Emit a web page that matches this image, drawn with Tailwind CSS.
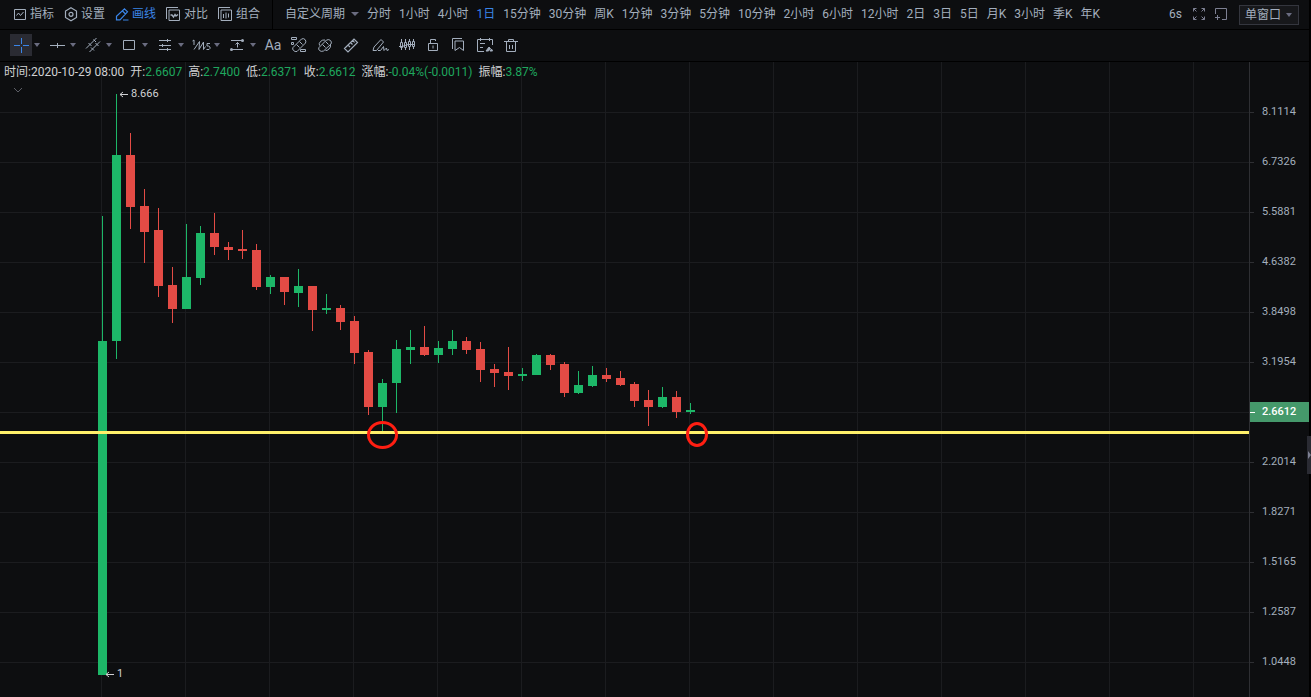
<!DOCTYPE html>
<html lang="zh-CN">
<head>
  <meta charset="UTF-8" />
  <meta name="viewport" content="width=device-width, initial-scale=1.0"/>
  <title>K线图</title>
  <script src="https://cdn.jsdelivr.net/npm/@tailwindcss/browser@4"></script>
</head>

<body class="relative flex h-screen flex-col overflow-hidden bg-black pr-[2px] font-[Roboto,'Noto_Sans_CJK_SC',sans-serif] text-xs text-[#a3aebd]">

  <!-- ===== Top bar ===== -->
  <header class="flex h-[30px] shrink-0 items-stretch border-b border-black bg-[#0d0e10] whitespace-nowrap">
    <nav class="flex w-[273px] shrink-0 items-center gap-[9px] border-r border-black pb-[2px] pl-3">
      <button class="flex items-center gap-[2px]">
        <svg class="size-4" viewBox="0 0 16 16" fill="none" stroke="currentColor"><path d="M2.500 3.500h11v10h-11zM4.500 9.500l2-2.500 2 2.500 3-3.500"/></svg>指标
      </button>
      <button class="flex items-center gap-[2px]">
        <svg class="size-4" viewBox="0 0 16 16" fill="none" stroke="currentColor" stroke-width="1.200"><path d="M8 1.800l5.500 3.200v6.500L8 14.700l-5.500-3.200V5z"/><circle cx="8" cy="8.300" r="2"/></svg>设置
      </button>
      <button class="flex items-center gap-[2px] text-[#3a85e8]">
        <svg class="size-4" viewBox="0 0 16 16" fill="none" stroke="currentColor" stroke-width="1.200"><path d="M10.500 2.800l3 3-7.500 8H2.500v-3.500zM8.500 5l3 3M9 14h5.500"/></svg>画线
      </button>
      <button class="flex items-center gap-[3px]">
        <svg class="size-4" viewBox="0 0 16 16" fill="none" stroke="currentColor"><path d="M1.500 13V1.500H13M4 4h10.500v10.500H4z"/><path stroke-width="1.400" d="M5.500 9h1.500l1.500 2 1.500-2.500 1 1.500 2-1.500"/></svg>对比
      </button>
      <button class="flex items-center gap-[3px]">
        <svg class="size-4" viewBox="0 0 16 16" fill="none" stroke="currentColor"><path d="M1.500 13V1.500H13M4 4h10.500v10.500H4zM6.500 8v4M9 6.500v6M11.500 7.500v4"/></svg>组合
      </button>
    </nav>

    <!-- Periods -->
    <div class="flex grow items-center gap-2 pb-[2px] pl-3">
      <label class="relative flex items-center">
        <select aria-label="自定义周期" class="w-[74px] appearance-none bg-transparent outline-none">
          <option>自定义周期</option>
        </select>
        <svg class="pointer-events-none absolute right-0 h-1 w-2" viewBox="0 0 8 4" fill="#6a6c80"><path d="M0 0h8L4 4z"/></svg>
      </label>
      <button>分时</button>
      <button>1小时</button>
      <button>4小时</button>
      <button class="text-[#3a85e8]">1日</button>
      <button>15分钟</button>
      <button>30分钟</button>
      <button>周K</button>
      <button>1分钟</button>
      <button>3分钟</button>
      <button>5分钟</button>
      <button>10分钟</button>
      <button>2小时</button>
      <button>6小时</button>
      <button>12小时</button>
      <button>2日</button>
      <button>3日</button>
      <button>5日</button>
      <button>月K</button>
      <button>3小时</button>
      <button>季K</button>
      <button>年K</button>
    </div>

    <div class="flex shrink-0 items-center pr-[10px]">
      <button class="pb-[2px]">6s</button>
      <button aria-label="全屏" class="ml-[9px] pb-[2px] text-[#7d8092]">
        <svg class="size-4" viewBox="0 0 16 16" fill="none" stroke="currentColor"><path d="M5.500 2.500h-3v3M2.500 2.500l3 3M10.500 2.500h3v3M13.500 2.500l-3 3M5.500 13.500h-3v-3M2.500 13.500l3-3M10.500 13.500h3v-3M13.500 13.500l-3-3"/></svg>
      </button>
      <button aria-label="新窗口" class="ml-[6px] pb-[2px] text-[#7d8092]">
        <svg class="size-4" viewBox="0 0 16 16" fill="none" stroke="currentColor"><path d="M2.500 8V2.500h11v11H9M2 11.500h5M4.500 9v5"/></svg>
      </button>
      <label class="relative ml-[10px] flex items-center">
        <select aria-label="窗口" class="h-5 w-[60px] appearance-none border border-[#34363e] bg-[#17181b] pl-[5px] outline-none">
          <option>单窗口</option>
        </select>
        <svg class="pointer-events-none absolute right-[7px] h-1 w-[6px]" viewBox="0 0 6 4" fill="#6a6c80"><path d="M0 0h6L3 4z"/></svg>
      </label>
    </div>
  </header>

  <!-- ===== Drawing tools ===== -->
  <div class="flex h-8 shrink-0 items-center border-b border-black bg-[#0d0e10] pb-px pl-[10px]">
    <button aria-label="十字光标" class="flex items-center">
      <svg class="size-[22px] bg-[#2a2b33]" viewBox="0 0 22 22" fill="none" stroke="#3a85e8"><path d="M4 11.500h6M13 11.500h6M11.500 4v6M11.500 13v6"/></svg>
      <svg class="mr-[6px] ml-[2px] h-1 w-[6px]" viewBox="0 0 6 4" fill="#6a6c80"><path d="M0 0h6L3 4z"/></svg>
    </button>
    <button aria-label="线段" class="flex items-center">
      <svg class="size-[22px]" viewBox="0 0 22 22" fill="none" stroke="currentColor"><path d="M4 11.500h15M11.500 9v5"/></svg>
      <svg class="mr-[6px] ml-[2px] h-1 w-[6px]" viewBox="0 0 6 4" fill="#6a6c80"><path d="M0 0h6L3 4z"/></svg>
    </button>
    <button aria-label="平行线" class="flex items-center">
      <svg class="size-[22px]" viewBox="0 0 22 22" fill="none" stroke="currentColor"><path d="M4 14.500L14.500 4M7.500 18L18 7.500M6.500 9l3 3M11.500 5.500l2.500 2.500M9 13.500l3 3M13.500 9l3 3"/></svg>
      <svg class="mr-[6px] ml-[2px] h-1 w-[6px]" viewBox="0 0 6 4" fill="#6a6c80"><path d="M0 0h6L3 4z"/></svg>
    </button>
    <button aria-label="矩形" class="flex items-center">
      <svg class="size-[22px]" viewBox="0 0 22 22" fill="none" stroke="currentColor"><path d="M5.500 6.500h11v9h-11z"/></svg>
      <svg class="mr-[6px] ml-[2px] h-1 w-[6px]" viewBox="0 0 6 4" fill="#6a6c80"><path d="M0 0h6L3 4z"/></svg>
    </button>
    <button aria-label="斐波那契" class="flex items-center">
      <svg class="size-[22px]" viewBox="0 0 22 22" fill="none" stroke="currentColor"><path d="M5 6.500h12M5 11.500h12M5 15.500h12M13.500 5v3M8.500 10v3M13.500 14v3"/></svg>
      <svg class="mr-[6px] ml-[2px] h-1 w-[6px]" viewBox="0 0 6 4" fill="#6a6c80"><path d="M0 0h6L3 4z"/></svg>
    </button>
    <button aria-label="波浪" class="flex items-center">
      <svg class="size-[22px]" viewBox="0 0 22 22" fill="none" stroke="currentColor"><path d="M2.500 7l1.500-1v5M4 15.500l5.500-8-.500 8L13.500 8v7.500l2-3M20 9.500h-3v2.500h1.500l1.500 1v1.500l-1 1h-2.500"/></svg>
      <svg class="mr-[6px] ml-[2px] h-1 w-[6px]" viewBox="0 0 6 4" fill="#6a6c80"><path d="M0 0h6L3 4z"/></svg>
    </button>
    <button aria-label="测量" class="flex items-center">
      <svg class="size-[22px]" viewBox="0 0 22 22" fill="none" stroke="currentColor"><path d="M5 6.500h12M5 15.500h12M11.500 8.500v5M9.500 10.500l2-2 2 2"/><g fill="currentColor" stroke="none"><circle cx="16.500" cy="6.500" r="1.500"/><circle cx="5.500" cy="15.500" r="1.500"/></g></svg>
      <svg class="mr-[6px] ml-[2px] h-1 w-[6px]" viewBox="0 0 6 4" fill="#6a6c80"><path d="M0 0h6L3 4z"/></svg>
    </button>

    <div class="flex items-center gap-1">
      <button class="h-[22px] w-[22px] text-sm leading-[22px]">Aa</button>
      <button aria-label="连续画线">
        <svg class="size-[22px]" viewBox="0 0 22 22" fill="none" stroke="currentColor"><path d="M3.500 3.500h5v2h-5zM3.500 8.500h2v2h-2zM12.500 15.500h5v2h-5zM5 13.500L13.500 5q2-1 3.500.500t.500 3.500L9 17.500q-2 .500-3.500-1T5 13.500zM8.500 10.500l3 3M11.500 7.500l3 3"/></svg>
      </button>
      <button aria-label="隐藏画线">
        <svg class="size-[22px]" viewBox="0 0 22 22" fill="none" stroke="currentColor"><path d="M5 13.500L12.500 6q2.500-1 4 .500t.500 3.500L9.500 17q-2.500 1-4-.500T5 13.500zM8.500 10.500l3 3M11.500 7.500l3 3M5.500 11.500q-1-2 1-4t4.500-1.500M16.500 11q.500 2-1.500 4t-3.500 1.500"/></svg>
      </button>
      <button aria-label="尺子">
        <svg class="size-[22px]" viewBox="0 0 22 22" fill="none" stroke="currentColor" stroke-width="1.200"><path d="M4.500 14.500L14 5l3.500 3.500L8 18zM8 11l2 2M10.500 8.500l2 2M13 6.500l1.500 2"/></svg>
      </button>
      <button aria-label="画笔" class="ml-1">
        <svg class="size-[22px]" viewBox="0 0 22 22" fill="none" stroke="currentColor"><path d="M3 16.500l1-3.500 7-7.500 2.500 2.500-7 8.500zM8 16.500h2.500l3-4 .500 4 2.500-2.500.500 2.500 2-1"/></svg>
      </button>
      <button aria-label="K线吸附">
        <svg class="size-[22px]" viewBox="0 0 22 22" fill="none" stroke="currentColor"><path d="M5.500 5v3M5.500 13v3M9.500 5v3M9.500 14v2M13.500 5v2M13.500 13v3M17.500 5v2M17.500 13v2M4.500 8.500h2v5h-2zM8.500 8.500h2v5h-2zM12.500 7.500h2v5h-2zM16.500 7.500h2v5h-2zM3 12.500h3l6-2h7"/></svg>
      </button>
      <button aria-label="锁定">
        <svg class="size-[22px]" viewBox="0 0 22 22" fill="none" stroke="currentColor"><path d="M6.500 9.500h9v7h-9zM8.500 9V5.500h5V7M11 11.500v3"/></svg>
      </button>
      <button aria-label="收藏">
        <svg class="size-[22px]" viewBox="0 0 22 22" fill="none" stroke="currentColor"><path d="M4.500 15V4.500H14M7 7h8.500v9.500l-4-3-4.500 3z"/></svg>
      </button>
      <button aria-label="画线列表">
        <svg class="size-[22px]" viewBox="0 0 22 22" fill="none" stroke="currentColor"><path d="M10 17.500H3.500v-12h15V11M6.500 4v3M15.500 4v3M6 9.500h5M6 13.500h3"/><path fill="currentColor" d="M12 17l3-4 1.500 1.500-2 2.500zM16 17l1.500-2 1 2z"/></svg>
      </button>
      <button aria-label="删除">
        <svg class="size-[22px]" viewBox="0 0 22 22" fill="none" stroke="currentColor"><path d="M4 7.500h14M8.500 7V5.500h5V7M6.500 8v9.500h9V8M9.500 11v4M12.500 11v4"/></svg>
      </button>
    </div>
  </div>

  <!-- ===== Chart ===== -->
  <main class="flex min-h-0 grow bg-[#0d0e10]">
    <section class="relative min-w-0 grow">
      <svg id="chart" class="absolute inset-0 h-full w-full" shape-rendering="crispEdges">
        <g id="grid" fill="#1b1c1f"></g>
        <g id="candles"></g>
        <rect y="369" width="100%" height="3" fill="#fff06a"/>
        <g fill="none" stroke="#ff1e12" stroke-width="3" shape-rendering="auto">
          <ellipse cx="382.500" cy="373" rx="14" ry="12.500"/>
          <ellipse cx="697" cy="372.500" rx="9.500" ry="11"/>
        </g>
        <g fill="none" stroke="#d0d1d3" shape-rendering="auto">
          <path d="M120 32.500h8M123 30l-3 2.500 3 2.500M106 612.500h8M109 610l-3 2.500 3 2.500"/>
        </g>
        <g fill="#d0d1d3" font-size="11">
          <text x="131" y="35">8.666</text>
          <text x="117" y="615">1</text>
        </g>
      </svg>

      <div class="relative flex h-5 items-center gap-[6px] pl-1 whitespace-nowrap text-[#d0d1d3]">
        <span>时间:2020-10-29 08:00</span>
        <span>开:<span class="text-[#1fa75e]">2.6607</span></span>
        <span>高:<span class="text-[#1fa75e]">2.7400</span></span>
        <span>低:<span class="text-[#1fa75e]">2.6371</span></span>
        <span>收:<span class="text-[#1fa75e]">2.6612</span></span>
        <span>涨幅:<span class="text-[#1fa75e]">-0.04%(-0.0011)</span></span>
        <span>振幅:<span class="text-[#1fa75e]">3.87%</span></span>
      </div>
      <button aria-label="收起" class="relative ml-[13px] block text-[#5c5e66]">
        <svg class="h-4 w-[10px]" viewBox="0 0 10 16" fill="none" stroke="currentColor"><path d="M1 6l4 4 4-4"/></svg>
      </button>
    </section>

    <!-- Price axis -->
    <aside class="w-[60px] shrink-0 overflow-hidden border-l border-[#2e2f33] pt-[25px] text-[11px] leading-4">
      <div class="flex h-[50px] items-center gap-2 before:h-px before:w-[4px] before:bg-[#2e2f33]">8.1114</div>
      <div class="flex h-[50px] items-center gap-2 before:h-px before:w-[4px] before:bg-[#2e2f33]">6.7326</div>
      <div class="flex h-[50px] items-center gap-2 before:h-px before:w-[4px] before:bg-[#2e2f33]">5.5881</div>
      <div class="flex h-[50px] items-center gap-2 before:h-px before:w-[4px] before:bg-[#2e2f33]">4.6382</div>
      <div class="flex h-[50px] items-center gap-2 before:h-px before:w-[4px] before:bg-[#2e2f33]">3.8498</div>
      <div class="flex h-[50px] items-center gap-2 before:h-px before:w-[4px] before:bg-[#2e2f33]">3.1954</div>
      <div class="-ml-px flex h-[50px] items-center">
        <div class="flex h-5 grow items-center gap-[7px] bg-[#45996b] font-medium text-white before:h-px before:w-[6px] before:bg-white">2.6612</div>
      </div>
      <div class="flex h-[50px] items-center gap-2 before:h-px before:w-[4px] before:bg-[#2e2f33]">2.2014</div>
      <div class="flex h-[50px] items-center gap-2 before:h-px before:w-[4px] before:bg-[#2e2f33]">1.8271</div>
      <div class="flex h-[50px] items-center gap-2 before:h-px before:w-[4px] before:bg-[#2e2f33]">1.5165</div>
      <div class="flex h-[50px] items-center gap-2 before:h-px before:w-[4px] before:bg-[#2e2f33]">1.2587</div>
      <div class="flex h-[50px] items-center gap-2 before:h-px before:w-[4px] before:bg-[#2e2f33]">1.0448</div>
    </aside>
  </main>

  <!-- Side panel handle -->
  <button aria-label="展开侧栏" class="absolute top-[436px] right-0 flex h-[38px] w-1 items-center bg-[#2a2b33]">
    <svg class="h-2 w-1" viewBox="0 0 4 8" fill="#7d8092"><path d="M1 0l3 4-3 4z"/></svg>
  </button>

  <script>
    const NS = 'http://www.w3.org/2000/svg';

    function rect(parent, x, y, width, height, fill) {
      const el = document.createElementNS(NS, 'rect');
      el.setAttribute('x', x);
      el.setAttribute('y', y);
      el.setAttribute('width', width);
      el.setAttribute('height', height);
      if (fill) el.setAttribute('fill', fill);
      parent.appendChild(el);
    }

    // Grid
    const grid = document.getElementById('grid');
    for (let x = 101; x < 1249; x += 84) rect(grid, x, 0, 1, '100%');
    for (let y = 50; y < 640; y += 50) rect(grid, 0, y, '100%', 1);

    // [high, body top, body bottom, low, rising]
    const candles = [
      [154, 279, 613, 613, 1], [32, 93, 279, 297, 1], [71, 93, 145, 167, 0], [127, 144, 170, 201, 0],
      [146, 168, 224, 235, 0], [205, 223, 247, 261, 0], [162, 215, 247, 247, 1], [164, 171, 216, 223, 1],
      [151, 171, 185, 193, 0], [180, 185, 188, 198, 0], [168, 187, 189, 197, 0], [182, 188, 225, 228, 0],
      [213, 215, 225, 232, 1], [215, 215, 230, 243, 0], [207, 224, 231, 245, 1], [224, 224, 248, 269, 0],
      [232, 246, 248, 252, 1], [243, 246, 260, 268, 0], [254, 259, 291, 302, 0], [288, 290, 345, 353, 0],
      [317, 321, 345, 370, 1], [278, 287, 321, 351, 1], [268, 285, 288, 302, 1], [264, 285, 293, 294, 0],
      [279, 286, 293, 301, 1], [268, 279, 287, 293, 1], [275, 279, 288, 292, 0], [280, 287, 308, 320, 0],
      [302, 307, 311, 325, 0], [285, 310, 314, 328, 0], [306, 312, 314, 319, 1], [292, 293, 313, 313, 1],
      [292, 293, 303, 308, 0], [300, 302, 331, 335, 0], [309, 323, 331, 332, 1], [304, 313, 324, 325, 1],
      [306, 313, 317, 320, 0], [309, 316, 323, 324, 0], [320, 322, 339, 345, 0], [328, 338, 345, 364, 0],
      [325, 335, 345, 346, 1], [329, 335, 350, 356, 0], [341, 348, 350, 352, 1]
    ];
    const layer = document.getElementById('candles');
    candles.forEach(([high, top, bottom, low, rising], i) => {
      const x = 102 + i * 14;
      const color = rising ? '#1db768' : '#e34b45';
      rect(layer, x, high, 1, low - high, color);
      rect(layer, x - 4, top, 9, bottom - top, color);
    });
  </script>
</body>
</html>
